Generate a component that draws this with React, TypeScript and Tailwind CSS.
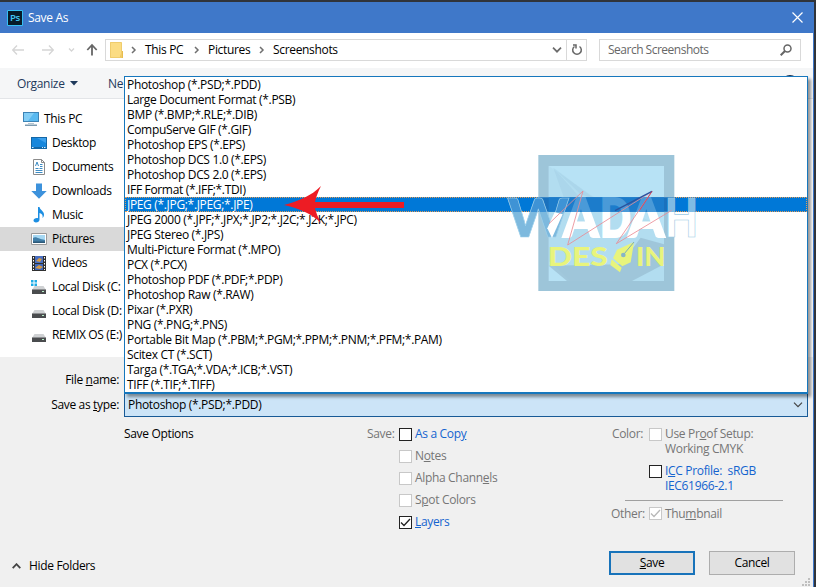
import type { ReactNode } from "react";

const formats = [
  "Photoshop (*.PSD;*.PDD)",
  "Large Document Format (*.PSB)",
  "BMP (*.BMP;*.RLE;*.DIB)",
  "CompuServe GIF (*.GIF)",
  "Photoshop EPS (*.EPS)",
  "Photoshop DCS 1.0 (*.EPS)",
  "Photoshop DCS 2.0 (*.EPS)",
  "IFF Format (*.IFF;*.TDI)",
  "JPEG (*.JPG;*.JPEG;*.JPE)",
  "JPEG 2000 (*.JPF;*.JPX;*.JP2;*.J2C;*.J2K;*.JPC)",
  "JPEG Stereo (*.JPS)",
  "Multi-Picture Format (*.MPO)",
  "PCX (*.PCX)",
  "Photoshop PDF (*.PDF;*.PDP)",
  "Photoshop Raw (*.RAW)",
  "Pixar (*.PXR)",
  "PNG (*.PNG;*.PNS)",
  "Portable Bit Map (*.PBM;*.PGM;*.PPM;*.PNM;*.PFM;*.PAM)",
  "Scitex CT (*.SCT)",
  "Targa (*.TGA;*.VDA;*.ICB;*.VST)",
  "TIFF (*.TIF;*.TIFF)",
];

const U = ({ children }: { children: ReactNode }) => <span className="underline">{children}</span>;

const PcIcon = () => (
  <svg width="16" height="16" viewBox="0 0 16 16">
    <path d="M0 1h16v10H0z" fill="#3d83b5" />
    <path d="M1 2h14v8H1z" fill="#59b9f0" />
    <path d="M1 2h10L5 10H1z" fill="#83cef6" />
    <path d="M5 12h6v1H5z" fill="#b4c5d0" />
    <path d="M2 13.500h12v1.500H2z" fill="#7c9bb0" />
  </svg>
);

const DesktopIcon = () => (
  <svg width="16" height="16" viewBox="0 0 16 16">
    <path d="M0 2h16v12H0z" fill="#1467a6" />
    <path d="M1 3h14v9H1z" fill="#1787dc" />
    <path d="M6 3h9v5z" fill="#3da1ed" />
    <path d="M1 12.500h1.500M11 12.500h1M13 12.500h1.500" stroke="#d6edff" />
  </svg>
);

const DocumentIcon = () => (
  <svg width="16" height="16" viewBox="0 0 16 16" fill="none">
    <path d="M2.500.5h8l3 3v12h-11z" fill="#fff" stroke="#8b8b8b" />
    <path d="M10.500.5v3h3" stroke="#8b8b8b" />
    <path d="m4.500 7 1.500-4L7.500 7M9 5.500h2.500M9 7.500h2.500M4.500 9.500h3M8.500 9.500h3M4.500 11.500h7M4.500 13.500h7" stroke="#3d8cc4" />
  </svg>
);

const DownloadIcon = () => (
  <svg width="16" height="16" viewBox="0 0 16 16">
    <path d="M5 .5h6V8h4.700L8 15.700.3 8H5z" fill="#3d92dc" />
  </svg>
);

const MusicIcon = () => (
  <svg width="16" height="16" viewBox="0 0 16 16">
    <path d="M7 0h1.500c.5 3 4.500 4 4.500 7.500 0 1.500-.5 2.700-1.500 3.500.6-2.600-.2-4.500-3-5v6.800c0 1.600-1.600 2.700-3.500 2.700-1.600 0-2.500-.8-2.500-1.900 0-1.900 2.400-2.900 4.500-2.400z" fill="#1c8ee2" />
  </svg>
);

const PicturesIcon = () => (
  <svg width="16" height="16" viewBox="0 0 16 16">
    <path d="M.5 2.500h15v11H.5z" fill="#fff" stroke="#999" />
    <path d="M2 4h12v8H2z" fill="#a6d8f3" />
    <path d="M2 7c3-2 5 1 12 2v3H2z" fill="#427fa8" />
    <path d="M2 10.500h12V12H2z" fill="#2c5978" />
  </svg>
);

const VideosIcon = () => (
  <svg width="16" height="16" viewBox="0 0 16 16">
    <path d="M1 1h14v15H1z" fill="#303030" />
    <path d="M4 1h8v7H4z" fill="#496fc1" />
    <path d="M4 9h8v6H4z" fill="#3f68bd" />
    <path d="M5 6 8 3l3 1-2 3zM4 13l4-3 4 2-3 2z" fill="#d59a46" />
    <path d="M2.500 2v13M13.500 2v13" stroke="#fff" strokeDasharray="1.500 1.500" />
  </svg>
);

const DiskIcon = ({ system = false }: { system?: boolean }) => (
  <svg width="16" height="16" viewBox="0 0 16 16">
    <path d="M3.500 7h9l2.500 4H1z" fill="#cfd1d3" />
    <path d="M1 10.500h14v4.500H1z" fill="#4a4c4e" />
    <path d="M11 12.500h2" stroke="#b9efc8" />
    {system && <path d="M0 1h2.500v2.500H0zM3.500 1H6v2.500H3.500zM0 4.500h2.500V7H0zM3.500 4.500H6V7H3.500z" fill="#1eace5" />}
  </svg>
);

const places = [
  { name: "This PC", icon: <PcIcon />, pad: "pl-[23px]" },
  { name: "Desktop", icon: <DesktopIcon />, pad: "pl-[31px]" },
  { name: "Documents", icon: <DocumentIcon />, pad: "pl-[31px]" },
  { name: "Downloads", icon: <DownloadIcon />, pad: "pl-[31px]" },
  { name: "Music", icon: <MusicIcon />, pad: "pl-[31px]" },
  { name: "Pictures", icon: <PicturesIcon />, pad: "pl-[31px]", active: true },
  { name: "Videos", icon: <VideosIcon />, pad: "pl-[31px]" },
  { name: "Local Disk (C:", icon: <DiskIcon system />, pad: "pl-[31px]" },
  { name: "Local Disk (D:", icon: <DiskIcon />, pad: "pl-[31px]" },
  { name: "REMIX OS (E:)", icon: <DiskIcon />, pad: "pl-[31px]" },
];

const Crumb = () => (
  <svg width="6" height="8" viewBox="0 0 6 8" fill="none" stroke="#707070" strokeWidth="1.500" className="shrink-0">
    <path d="m1 1 3 3-3 3" />
  </svg>
);

const Check = ({ checked = false, disabled = false }: { checked?: boolean; disabled?: boolean }) => (
  <span className={`flex h-[13px] w-[13px] shrink-0 items-center justify-center border bg-white ${disabled ? "border-[#c8c8c8]" : "border-[#222]"}`}>
    {checked && (
      <svg width="11" height="11" viewBox="0 0 11 11" fill="none" stroke={disabled ? "#b8b8b8" : "#222"} strokeWidth="1.300">
        <path d="m1 5.500 3 3L10 2" />
      </svg>
    )}
  </span>
);

const Option = ({ children, checked, disabled }: { children: ReactNode; checked?: boolean; disabled?: boolean }) => (
  <div className={`flex h-4 items-center gap-[3px] ${disabled ? "" : "text-[#1464cf]"}`}>
    <Check checked={checked} disabled={disabled} />
    <span className="self-start">{children}</span>
  </div>
);

const Watermark = () => (
  <svg className="absolute left-[375px] top-[68px] overflow-visible" width="205" height="155" viewBox="0 0 615 465">
    <defs>
      <linearGradient id="word" gradientUnits="userSpaceOnUse" x1="0" y1="156" x2="0" y2="280">
        <stop offset=".355" stopColor="#4a9ad8" />
        <stop offset=".355" stopColor="#fff" />
      </linearGradient>
      <linearGradient id="wordW" gradientUnits="userSpaceOnUse" x1="0" y1="156" x2="0" y2="280">
        <stop offset=".355" stopColor="#3f93d5" />
        <stop offset=".355" stopColor="#7db9de" />
      </linearGradient>
      <linearGradient id="wordH" gradientUnits="userSpaceOnUse" x1="0" y1="156" x2="0" y2="280">
        <stop offset=".355" stopColor="#7fbbe4" />
        <stop offset=".355" stopColor="#fff" />
      </linearGradient>
    </defs>
    <path d="M115 30h408v408H115z" fill="#9dc5d9" />
    <path d="M146 63h346v345H146z" fill="#b7e2f5" />
    <path d="m146 63 150 103 150 60 46 40v142H210l-64-60z" fill="#a9d4e7" opacity=".35" />
    <path d="m146 362 55 46h195l96-50v-60l-70-20-60 80z" fill="#92b7cb" opacity=".6" />
    <path d="m160 68 80 90h-48zM160 68l130 98-50-20z" fill="#a4d0e5" opacity=".5" />
    <path d="M115 157h408v43H115z" fill="#1a71bd" />
    <path d="M146 157h346v43H146z" fill="#1c7ccb" />
    <g fontFamily="Lato" fontWeight="900" fontSize="158" strokeWidth="6">
      <text x="494" y="277" textLength="100" lengthAdjust="spacingAndGlyphs" fill="url(#wordH)" stroke="#9ccae5" strokeWidth="2">H</text>
      <text x="385" y="277" textLength="108" lengthAdjust="spacingAndGlyphs" fill="url(#word)" stroke="url(#word)">A</text>
      <text x="300" y="277" textLength="92" lengthAdjust="spacingAndGlyphs" fill="url(#word)" stroke="url(#word)">D</text>
      <text x="190" y="277" textLength="106" lengthAdjust="spacingAndGlyphs" fill="url(#word)" stroke="url(#word)">A</text>
      <text x="22" y="277" textLength="186" lengthAdjust="spacingAndGlyphs" fill="url(#wordW)" stroke="#9ccfea" strokeWidth="2">W</text>
    </g>
    <path d="m142 250 22-48 24 6-32 71z" fill="#fff" />
    <path d="m249 138-102 98m102-98-46 162L456 139 349 296l166-100" fill="none" stroke="#e98a94" strokeWidth="2.500" />
    <path d="m345 197 111-58" fill="none" stroke="#29529f" strokeWidth="4" />
    <path d="m456 139-38 58" fill="none" stroke="#d6485e" strokeWidth="3" />
    <g fontFamily="Lato" fontWeight="900" fontSize="82" fill="#e8f47c">
      <text x="143" y="362" textLength="180" lengthAdjust="spacingAndGlyphs">DES</text>
      <text x="408" y="362" textLength="88" lengthAdjust="spacingAndGlyphs">IN</text>
    </g>
    <path d="m402 291-10 61-25 12-28-24 12-26z" fill="#e8f47c" />
    <path d="m335 343 30 25-5 14-29-22z" fill="#e8f47c" />
    <path d="m402 291-30 36" stroke="#79a9bb" strokeWidth="3" />
    <circle cx="370" cy="330" r="7" fill="#88b5c7" />
  </svg>
);

const FormatMenu = () => (
  <div className="absolute left-[124px] top-[74px] h-[318px] w-[684px] border border-b-2 border-[#1677bd] bg-white shadow-[3px_3px_3px_rgba(0,0,0,0.4)]">
    {formats.map((format, i) => (
      <div
        key={format}
        className={`h-[15px] pl-0.5 ${i === 8 ? "bg-[#0078d7] text-white outline-1 -outline-offset-1 outline-dotted outline-[#e39b55]" : ""}`}
      >
        {format}
      </div>
    ))}
    <Watermark />
    <svg className="absolute left-[159px] top-[109px]" width="122" height="37" viewBox="0 0 122 37" fill="#ed1c24">
      <path d="M0 19c15-4 27-9 37-19-3 6-5 11-6 16h89v6H31c1 5 3 9 6 15C27 27 14 22 0 19z" />
    </svg>
  </div>
);

const App = () => {
  return (
    <div className="relative flex h-[587px] w-[816px] flex-col overflow-hidden whitespace-nowrap border-r-2 border-t-2 border-[#30343a] bg-[#f0f0f0] font-['Open_Sans',sans-serif] text-[12px] leading-[15px] tracking-[-0.33px] text-black">
      <div className="flex min-h-0 flex-1 flex-col border-r border-[#3f78c9]">
        <header className="flex h-[31px] shrink-0 items-center bg-[#3f78c9] pl-[7px] text-white">
          <svg width="16" height="16" viewBox="0 0 16 16">
            <path d="M.5.5h15v15H.5z" fill="#071b28" stroke="#35bff3" />
            <text x="3" y="11" fontSize="9" fontWeight="600" fill="#42c8f5" textLength="10" lengthAdjust="spacingAndGlyphs">Ps</text>
          </svg>
          <span className="ml-[5px]">Save As</span>
          <svg width="11" height="11" viewBox="0 0 11 11" className="ml-auto mr-[10px]" fill="none" stroke="#fff" strokeWidth="1.200">
            <path d="m.5.5 10 10m0-10-10 10" />
          </svg>
        </header>

        <nav className="flex h-[35px] shrink-0 items-center bg-white pb-[2px] pl-3">
          <svg width="88" height="14" viewBox="0 0 88 14" fill="none" stroke="#d5d5d5" strokeWidth="1.300">
            <path d="M12 7H1m4-4.500L.7 7 5 11.500M30 7h11m-4-4.500L41.300 7 37 11.500" />
            <path d="m57 5.500 2.500 2.500L62 5.500" />
            <path d="M80 12.500V2m-4.700 5L80 2l4.700 5" stroke="#666" strokeWidth="1.800" />
          </svg>
          <div className="ml-[5px] flex h-[22px] w-[482px] items-center border border-[#d9d9d9]">
            <svg width="14" height="16" viewBox="0 0 14 16" className="ml-1">
              <path d="M0 0h11.500v16H0z" fill="#fbdc82" />
              <path d="M11.500 9H13v7h-3z" fill="#e9bd4d" />
              <path d="M.5.500h11v15H.5z" fill="none" stroke="#efcc6c" />
            </svg>
            <div className="ml-[7px] flex items-center">
              <Crumb />
              <span className="ml-2 w-[49px]">This PC</span>
              <Crumb />
              <span className="ml-2 w-[51px]">Pictures</span>
              <Crumb />
              <span className="ml-2">Screenshots</span>
            </div>
            <svg width="10" height="6" viewBox="0 0 10 6" className="ml-auto mr-[4px]" fill="none" stroke="#6b6b6b" strokeWidth="1.700">
              <path d="m1 .7 4 4 4-4" />
            </svg>
            <div className="flex h-full w-5 items-center justify-center border-l border-[#d9d9d9]">
              <svg width="12" height="12" viewBox="0 0 12 12" fill="none" stroke="#666" strokeWidth="1.500">
                <path d="M8.500 2.500a4.300 4.300 0 1 1-5 0M2 1h3v3.500" />
              </svg>
            </div>
          </div>
          <div className="ml-3 flex h-[22px] w-[202px] items-center border border-[#d9d9d9] pl-2 text-[#686868]">
            <span className="tracking-[-0.5px]">Search Screenshots</span>
            <svg width="12" height="12" viewBox="0 0 12 12" className="ml-auto mr-2" fill="none" stroke="#666" strokeWidth="1.500">
              <circle cx="7.500" cy="4.500" r="3.500" />
              <path d="M5 7 .7 11.300" strokeWidth="2" />
            </svg>
          </div>
        </nav>

        <div className="flex h-[31px] shrink-0 items-center overflow-hidden border-b border-[#e3e5e8] bg-[#f5f6f7] pl-[17px] text-[#1e395b]">
          <span className="w-[53px]">Organize</span>
          <svg width="8" height="5" viewBox="0 0 8 5">
            <path d="M0 0h8L4 4.500z" fill="#1e395b" />
          </svg>
          <span className="ml-[30px]">Ne</span>
          <span className="ml-auto mr-[15px] h-[16px] w-[16px] rounded-full bg-[#1b2f4d]" />
        </div>

        <aside className="h-[258px] shrink-0 bg-white pt-2">
          {places.map((place) => (
            <div key={place.name} className={`flex h-6 w-[124px] items-center gap-[5px] ${place.pad} ${place.active ? "bg-[#d9d9d9]" : ""}`}>
              <span className="shrink-0">{place.icon}</span>
              <span className="pb-px">{place.name}</span>
            </div>
          ))}
        </aside>

        <main className="flex min-h-0 flex-1 flex-col">
          <div className="mt-[10px] flex h-[26px] w-[119px] items-center justify-end pb-px">
            <span>File <U>n</U>ame:</span>
          </div>
          <div className="flex h-[23px] items-center">
            <div className="mr-[5px] w-[119px] text-right">
              Save as <U>t</U>ype:
            </div>
            <div className="flex h-[24px] w-[684px] items-center border border-[#185a96] bg-[#cce4f7] pl-[3px]">
              <span>Photoshop (*.PSD;*.PDD)</span>
              <svg width="10" height="6" viewBox="0 0 10 6" className="ml-auto mr-[4px]" fill="none" stroke="#444" strokeWidth="1.200">
                <path d="m1 .7 4 4 4-4" />
              </svg>
            </div>
          </div>

          <div className="flex h-[120px] pl-[124px] pt-[10px]">
            <div className="w-[243px] shrink-0">Save Options</div>
            <div className="flex w-[243px] shrink-0 text-[#767676]">
              <span className="w-[32px]">Save:</span>
              <div className="flex flex-col gap-[6px]">
                <Option>As a Cop<U>y</U></Option>
                <Option disabled>N<U>o</U>tes</Option>
                <Option disabled>Alpha Chann<U>e</U>ls</Option>
                <Option disabled>S<U>p</U>ot Colors</Option>
                <Option checked><U>L</U>ayers</Option>
              </div>
            </div>
            <div className="w-[173px] shrink-0 text-[#767676]">
              <div className="flex pl-[2px]">
                <span className="w-[37px]">Color:</span>
                <span className="mt-[2px]"><Check disabled /></span>
                <div className="ml-[3px]">
                  <p>Use Pr<U>o</U>of Setup:</p>
                  <p>Working CMYK</p>
                </div>
              </div>
              <div className="mt-[7px] flex pl-[39px] text-[#1464cf]">
                <span className="mt-[2px]"><Check /></span>
                <div className="ml-[3px]">
                  <p>I<U>C</U>C Profile:&nbsp; sRGB</p>
                  <p>IEC61966-2.1</p>
                </div>
              </div>
              <div className="ml-[15px] mt-[7px] w-[158px] border-t border-[#a0a0a0]" />
              <div className="mt-[5px] flex items-center pl-px">
                <span className="w-[38px]">Other:</span>
                <Check disabled checked />
                <span className="ml-[3px]">Thu<U>m</U>bnail</span>
              </div>
            </div>
          </div>

          <footer className="relative mt-auto flex h-[37px] items-start pl-3">
            <div className="mt-[8px] flex items-center">
              <svg width="9" height="6" viewBox="0 0 9 6" fill="none" stroke="#444" strokeWidth="1.800">
                <path d="m.7 5.200 3.800-4 3.800 4" />
              </svg>
              <span className="ml-2">Hide Folders</span>
            </div>
            <button className="ml-auto mt-px flex h-6 w-[86px] items-center justify-center border-2 border-[#1873ba] bg-[#e1e1e1] pb-px">
              <span><U>S</U>ave</span>
            </button>
            <button className="ml-[14px] mr-[18px] mt-px flex h-6 w-[86px] items-center justify-center border border-[#adadad] bg-[#e1e1e1] pb-px">
              Cancel
            </button>
            <svg width="8" height="8" viewBox="0 0 8 8" className="absolute bottom-[1px] right-[3px]" fill="#bfbfbf">
              <path d="M6 0h2v2H6zM3 3h2v2H3zM6 3h2v2H6zM0 6h2v2H0zM3 6h2v2H3zM6 6h2v2H6z" />
            </svg>
          </footer>
        </main>
      </div>
      <FormatMenu />
    </div>
  );
};

export default App;
